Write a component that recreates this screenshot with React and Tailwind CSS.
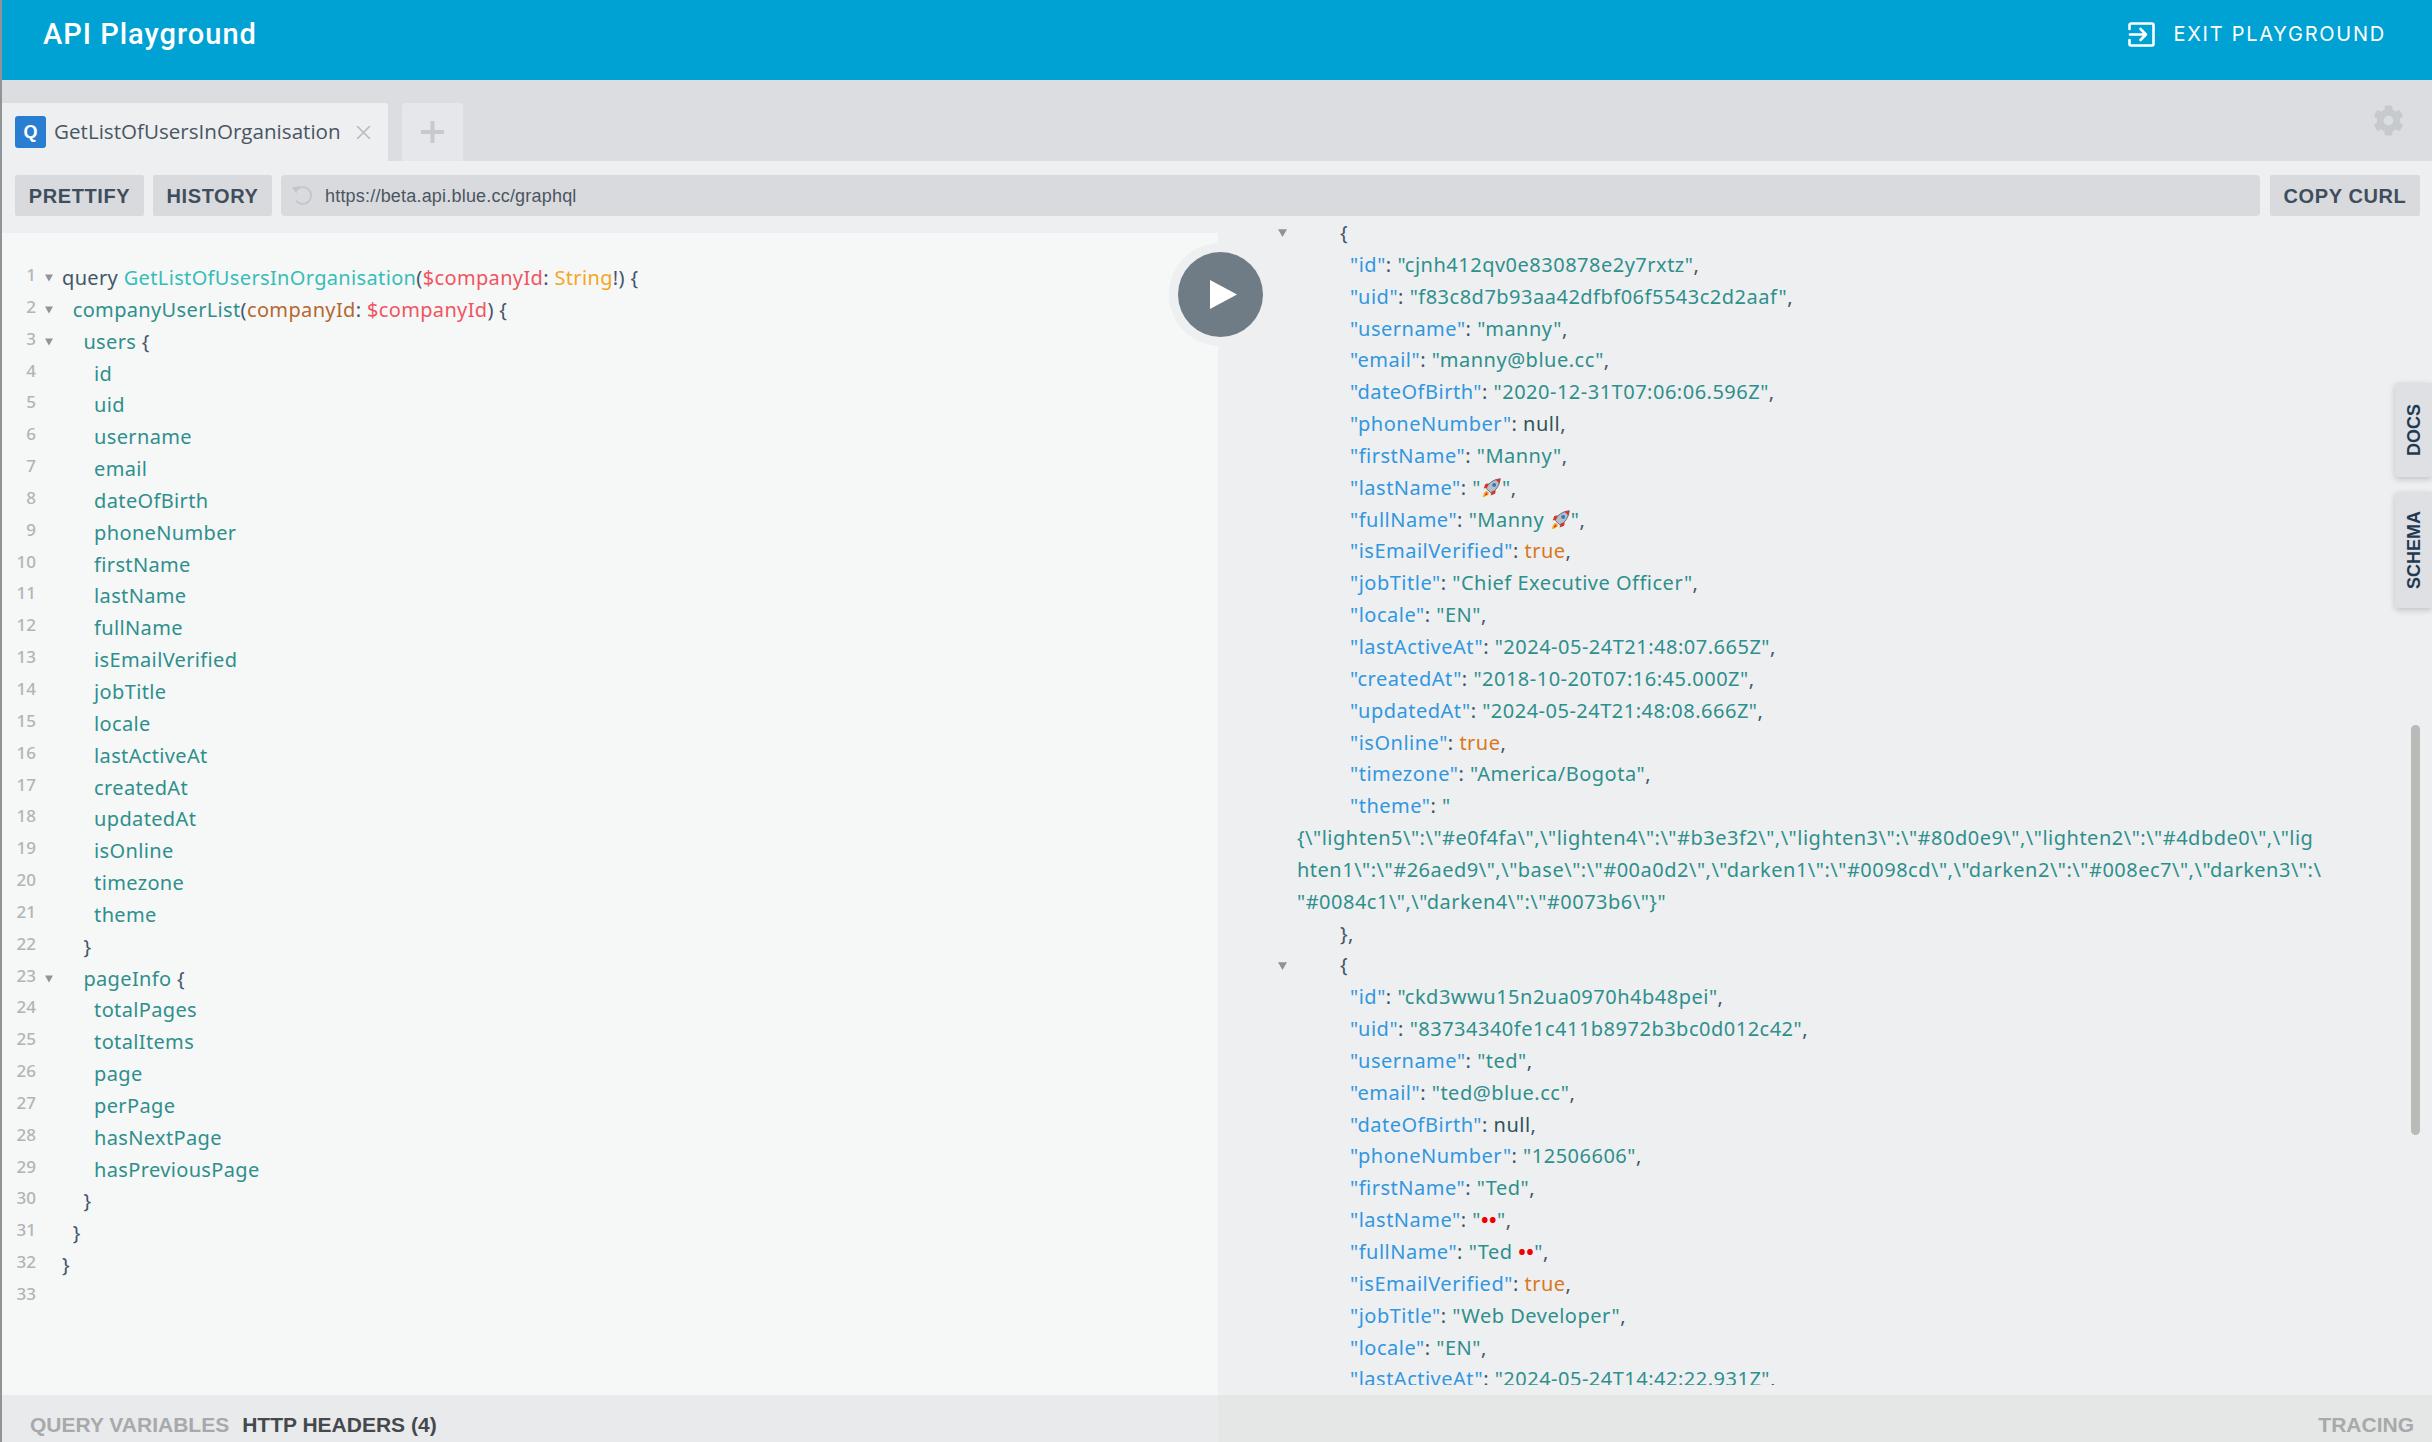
import { FaCog } from 'react-icons/fa';

const Q = ({ c, children }) => <span className={c}>{children}</span>;

const prop = 'text-[#2f8f8c]';
const punct = 'text-[#44566a]';

// query editor lines: [indent level, fold arrow, content]
const fields = ['id', 'uid', 'username', 'email', 'dateOfBirth', 'phoneNumber', 'firstName', 'lastName', 'fullName', 'isEmailVerified', 'jobTitle', 'locale', 'lastActiveAt', 'createdAt', 'updatedAt', 'isOnline', 'timezone', 'theme'];
const pageFields = ['totalPages', 'totalItems', 'page', 'perPage', 'hasNextPage', 'hasPreviousPage'];

const queryLines = [
  [0, true, (
    <>
      <Q c={punct}>query </Q>
      <Q c="text-[#36bdb9]">GetListOfUsersInOrganisation</Q>
      <Q c={punct}>(</Q>
      <Q c="text-[#f0555f]">$companyId</Q>
      <Q c={punct}>: </Q>
      <Q c="text-[#f5a623]">String</Q>
      <Q c={punct}>!) {'{'}</Q>
    </>
  )],
  [1, true, (
    <>
      <Q c={prop}>companyUserList</Q>
      <Q c={punct}>(</Q>
      <Q c="text-[#b5682f]">companyId</Q>
      <Q c={punct}>: </Q>
      <Q c="text-[#f0555f]">$companyId</Q>
      <Q c={punct}>) {'{'}</Q>
    </>
  )],
  [2, true, <><Q c={prop}>users</Q><Q c={punct}> {'{'}</Q></>],
  ...fields.map((f) => [3, false, <Q c={prop}>{f}</Q>]),
  [2, false, <Q c={punct}>{'}'}</Q>],
  [2, true, <><Q c={prop}>pageInfo</Q><Q c={punct}> {'{'}</Q></>],
  ...pageFields.map((f) => [3, false, <Q c={prop}>{f}</Q>]),
  [2, false, <Q c={punct}>{'}'}</Q>],
  [1, false, <Q c={punct}>{'}'}</Q>],
  [0, false, <Q c={punct}>{'}'}</Q>],
  [0, false, null],
];

const indents = ['pl-0', 'pl-[10.7px]', 'pl-[21.4px]', 'pl-[32.1px]'];

const firstUser = [
  ['id', 'cjnh412qv0e830878e2y7rxtz'],
  ['uid', 'f83c8d7b93aa42dfbf06f5543c2d2aaf'],
  ['username', 'manny'],
  ['email', 'manny@blue.cc'],
  ['dateOfBirth', '2020-12-31T07:06:06.596Z'],
  ['phoneNumber', null],
  ['firstName', 'Manny'],
  ['lastName', 'rocket'],
  ['fullName', 'Manny rocket'],
  ['isEmailVerified', true],
  ['jobTitle', 'Chief Executive Officer'],
  ['locale', 'EN'],
  ['lastActiveAt', '2024-05-24T21:48:07.665Z'],
  ['createdAt', '2018-10-20T07:16:45.000Z'],
  ['updatedAt', '2024-05-24T21:48:08.666Z'],
  ['isOnline', true],
  ['timezone', 'America/Bogota'],
];

const secondUser = [
  ['id', 'ckd3wwu15n2ua0970h4b48pei'],
  ['uid', '83734340fe1c411b8972b3bc0d012c42'],
  ['username', 'ted'],
  ['email', 'ted@blue.cc'],
  ['dateOfBirth', null],
  ['phoneNumber', '12506606'],
  ['firstName', 'Ted'],
  ['lastName', 'eyes'],
  ['fullName', 'Ted eyes'],
  ['isEmailVerified', true],
  ['jobTitle', 'Web Developer'],
  ['locale', 'EN'],
  ['lastActiveAt', '2024-05-24T14:42:22.931Z'],
];

const Rocket = () => (
  <svg viewBox="0 0 24 24" className="inline-block h-[21px] w-[21px] align-[-3px]">
    <path d="M6 13l5 5c6-2 10-8 11-16-8 1-14 5-16 11z" fill="#b4bfcb" stroke="#46535f" strokeWidth="0.9" />
    <path d="M16 3c2 .8 4 2.800 5 5l1-6z" fill="#d8322a" />
    <circle cx="15" cy="9" r="2.200" fill="#2f78bd" />
    <path d="M7 12l-4 1 2-5 4-1zM12 17l-1 4 5-2 1-4z" fill="#d8322a" />
    <path d="M7 16c-3 0-4 3-5 7 4-1 7-2 7-5z" fill="#f5a623" />
    <path d="M6.500 18c-1 .3-1.700 1.500-2 3 1.500-.3 3-1 3-2z" fill="#d8322a" />
  </svg>
);

const stringValue = (v) => {
  if (v === 'rocket') return <>&quot;<Rocket />&quot;</>;
  if (v === 'Manny rocket') return <>&quot;Manny <Rocket />&quot;</>;
  if (v === 'eyes') return <>&quot;<span className="font-bold text-[#f00000]">••</span>&quot;</>;
  if (v === 'Ted eyes') return <>&quot;Ted <span className="font-bold text-[#f00000]">••</span>&quot;</>;
  return `"${v}"`;
};

function JsonRow({ name, value }) {
  let val;
  if (value === null) val = <span className="text-[#2f5458]">null</span>;
  else if (value === true) val = <span className="text-[#d9781c]">true</span>;
  else val = <span className="text-[#2f8f8c]">{stringValue(value)}</span>;
  return (
    <div className="h-[31.85px] pl-[132px] whitespace-pre">
      <span className="text-[#3197e0]">&quot;{name}&quot;</span>
      <span className={punct}>: </span>
      {val}
      <span className={punct}>,</span>
    </div>
  );
}

function OpenBrace() {
  return (
    <div className="flex h-[31.85px] items-center pl-[60px]">
      <svg viewBox="0 0 8 8" className="h-[9px] w-[9px]"><path d="M0 1h8L4 8z" fill="#8f9499" /></svg>
      <span className={`ml-[53px] ${punct}`}>{'{'}</span>
    </div>
  );
}

function App() {
  return (
    <div className="relative flex h-screen flex-col overflow-hidden border-l-2 border-[#8e9498] bg-[#eeeff1] font-['Liberation_Sans',sans-serif]">
      {/* Header */}
      <header className="flex h-[80px] shrink-0 items-start justify-between bg-[#00a2d4] pl-[41px] pr-[46px] text-white">
        <div className="pt-[14px] font-['Roboto',sans-serif] text-[29px] leading-[40px] font-medium tracking-[1px]">API Playground</div>
        <div className="flex items-center pt-[20px]">
          <svg viewBox="0 0 27 25" className="h-[25px] w-[27px]" fill="none" stroke="white" strokeWidth="2.6" strokeLinecap="round" strokeLinejoin="round">
            <path d="M1.5 7V3a1.5 1.5 0 0 1 1.5-1.5h21A1.5 1.5 0 0 1 25.5 3v19a1.5 1.5 0 0 1-1.5 1.5H3A1.5 1.5 0 0 1 1.5 22v-4" />
            <path d="M2 12.5h15M12.5 7l5.5 5.5-5.5 5.5" />
          </svg>
          <span className="ml-[18px] font-['Inter',sans-serif] text-[20px] leading-[28px] tracking-[1.75px]">EXIT PLAYGROUND</span>
        </div>
      </header>

      {/* Tabs */}
      <div className="flex h-[81px] shrink-0 items-end bg-[#dcdde0] pr-[28px]">
        <div className="flex h-[58px] w-[386px] items-center rounded-tr-[3px] bg-[#eeeff1] pl-[13px]">
          <span className="flex h-[32px] w-[31px] items-center justify-center rounded-[3px] bg-[#2a7ed2] text-[18px] font-bold text-white">Q</span>
          <span className="ml-[8px] pb-[2px] font-['Open_Sans',sans-serif] text-[20.6px] text-[#4a5561]">GetListOfUsersInOrganisation</span>
          <svg viewBox="0 0 15 13" className="ml-[15px] h-[13px] w-[15px]" stroke="#b6bcc2" strokeWidth="1.6"><path d="M1 0l13 13M14 0L1 13" /></svg>
        </div>
        <div className="ml-[14px] flex h-[58px] w-[61px] items-center justify-center rounded-t-[3px] bg-[#e6e7ea]">
          <svg viewBox="0 0 23 22" className="h-[22px] w-[23px]" stroke="#c6cacf" strokeWidth="4"><path d="M0 11h23M11.500 0v22" /></svg>
        </div>
        <div className="mb-[25px] ml-auto">
          <FaCog className="h-[31px] w-[31px] text-[#c6cacd]" />
        </div>
      </div>

      {/* Toolbar */}
      <div className="flex h-[55px] shrink-0 items-end gap-[9px] pl-[13px] pr-[12px] text-[20px] font-bold tracking-[0.6px] text-[#3f4e5c]">
        <button className="h-[41px] w-[129px] rounded-[2px] bg-[#d9dadd]">PRETTIFY</button>
        <button className="h-[41px] w-[119px] rounded-[2px] bg-[#d9dadd]">HISTORY</button>
        <div className="flex h-[41px] flex-1 items-center rounded-[4px] bg-[#d9dadd] pl-[10px] text-[18px] font-normal tracking-[0.2px] text-[#4a5561]">
          <svg viewBox="0 0 22 20" className="h-[21px] w-[23px]" fill="none" stroke="#c2c6ca" strokeWidth="1.8">
            <path d="M6 4a8 8 0 1 1-1 11" />
            <path d="M1 2l7-1-3 7z" fill="#c2c6ca" stroke="none" />
          </svg>
          <span className="ml-[11px] pt-px">https://beta.api.blue.cc/graphql</span>
        </div>
        <button className="ml-px h-[41px] w-[150px] rounded-[2px] bg-[#d9dadd]">COPY CURL</button>
      </div>

      {/* Editor and results */}
      <div className="flex min-h-0 flex-1">
        <div className="flex w-[1216px] shrink-0 flex-col pt-[17px]">
          <div className="min-h-0 flex-1 bg-[#f6f7f7] pt-[29px] font-['Noto_Sans',sans-serif] text-[20px] leading-[31.85px] tracking-[0.35px]">
            {queryLines.map(([level, fold, content], i) => (
              <div key={i} className="flex h-[31.85px]">
                <span className="w-[34px] shrink-0 pb-[6px] text-right text-[17px] leading-[26px] font-medium tracking-normal text-[#b2b4b5]">{i + 1}</span>
                <span className="flex w-[26px] shrink-0 items-center pl-[9px]">
                  {fold && <svg viewBox="0 0 8 8" className="h-[9px] w-[8px]"><path d="M0 1h8L4 8z" fill="#8f9499" /></svg>}
                </span>
                <span className={`whitespace-pre ${indents[level]}`}>{content}</span>
              </div>
            ))}
          </div>
          <div className="flex h-[47px] shrink-0 items-center gap-[13px] bg-[#e9eaec] pl-[28px] pt-[12px] text-[21px] font-bold">
            <span className="text-[#a7a9aa]">QUERY VARIABLES</span>
            <span className="text-[#45494c]">HTTP HEADERS (4)</span>
          </div>
        </div>

        <div className="flex min-w-0 flex-1 flex-col">
          <div className="mb-[10px] min-h-0 flex-1 overflow-hidden pt-[1px] font-['Noto_Sans',sans-serif] text-[20px] leading-[31.85px] tracking-[0.5px]">
            <OpenBrace />
            {firstUser.map(([k, v]) => <JsonRow key={k} name={k} value={v} />)}
            <div className="h-[31.85px] pl-[132px] whitespace-pre">
              <span className="text-[#3197e0]">&quot;theme&quot;</span>
              <span className={punct}>: </span>
              <span className={prop}>&quot;</span>
            </div>
            <div className={`h-[31.85px] pl-[79px] whitespace-pre ${prop}`}>{'{\\"lighten5\\":\\"#e0f4fa\\",\\"lighten4\\":\\"#b3e3f2\\",\\"lighten3\\":\\"#80d0e9\\",\\"lighten2\\":\\"#4dbde0\\",\\"lig'}</div>
            <div className={`h-[31.85px] pl-[79px] whitespace-pre ${prop}`}>{'hten1\\":\\"#26aed9\\",\\"base\\":\\"#00a0d2\\",\\"darken1\\":\\"#0098cd\\",\\"darken2\\":\\"#008ec7\\",\\"darken3\\":\\'}</div>
            <div className={`h-[31.85px] pl-[79px] whitespace-pre ${prop}`}>{'"#0084c1\\",\\"darken4\\":\\"#0073b6\\"}"'}</div>
            <div className={`h-[31.85px] pl-[122px] ${punct}`}>{'},'}</div>
            <OpenBrace />
            {secondUser.map(([k, v]) => <JsonRow key={k} name={k} value={v} />)}
          </div>
          <div className="flex h-[47px] shrink-0 items-center justify-end bg-[#e5e6e6] pr-[18px] pt-[12px] text-[21px] font-bold text-[#a7a9aa]">TRACING</div>
        </div>
      </div>

      {/* Play button */}
      <div className="absolute top-[243px] left-[1167px] flex h-[103px] w-[103px] items-center justify-center rounded-full bg-[#eeeff1]">
        <div className="flex h-[85px] w-[85px] items-center justify-center rounded-full bg-[#6f7b85]">
          <svg viewBox="0 0 27 29" className="ml-[6px] h-[29px] w-[27px]"><path d="M0 0l27 14.500L0 29z" fill="white" /></svg>
        </div>
      </div>

      {/* Side tabs */}
      <div className="absolute top-[383px] right-0 flex h-[94px] w-[37px] items-center justify-center rounded-l-[3px] bg-[#dfe0e3] pl-[2px] shadow-[0_2px_6px_rgba(0,0,0,0.2)]">
        <span className="rotate-180 text-[18px] font-bold text-[#1f3a52] [writing-mode:vertical-rl]">DOCS</span>
      </div>
      <div className="absolute top-[492px] right-0 flex h-[116px] w-[37px] items-center justify-center rounded-l-[3px] bg-[#dfe0e3] pl-[2px] shadow-[0_2px_6px_rgba(0,0,0,0.2)]">
        <span className="rotate-180 text-[18px] font-bold text-[#1f3a52] [writing-mode:vertical-rl]">SCHEMA</span>
      </div>

      {/* Results scrollbar */}
      <div className="absolute top-[725px] right-[12px] h-[410px] w-[9px] rounded-full bg-[#b9bbb9]" />
    </div>
  );
}

export default App;
